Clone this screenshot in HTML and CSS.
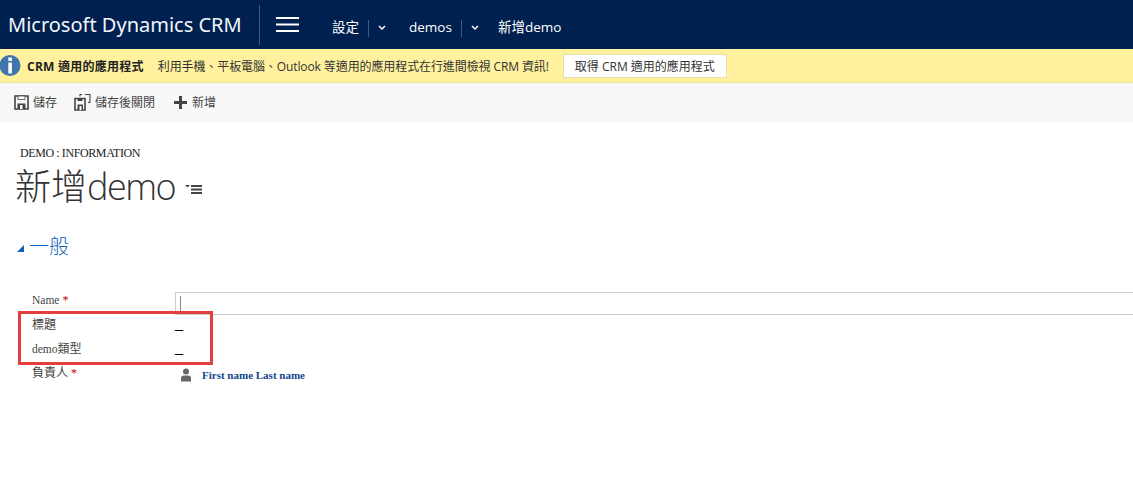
FILE: index.html
```html
<!DOCTYPE html>
<html lang="zh-Hant">
<head>
<meta charset="utf-8">
<title>新增demo</title>
<link rel="stylesheet" href="styles.css">
</head>
<body>
<header class="nav">
  <div class="brand">Microsoft Dynamics CRM</div>
  <div class="burger"><svg width="23" height="15" viewBox="0 0 23 15"><path d="M0 1h23M0 7.500h23M0 14h23" stroke="#fff" stroke-width="2" fill="none"/></svg></div>
  <div class="crumb">設定</div>
  <div class="sep"></div>
  <div class="chev"><svg width="8" height="6" viewBox="0 0 8 6"><path d="M1 1l3 3 3-3" stroke="#fff" stroke-width="1.500" fill="none"/></svg></div>
  <div class="crumb crumb-demos">demos</div>
  <div class="sep"></div>
  <div class="chev"><svg width="8" height="6" viewBox="0 0 8 6"><path d="M1 1l3 3 3-3" stroke="#fff" stroke-width="1.500" fill="none"/></svg></div>
  <div class="crumb">新增demo</div>
</header>
<div class="notice">
  <svg class="info" width="21" height="23" viewBox="0 0 21 23"><circle cx="10" cy="11.500" r="10.500" fill="#3f74ad"/><rect x="8.300" y="3.500" width="3.600" height="3.400" fill="#fff"/><rect x="8.300" y="8.500" width="3.600" height="11" fill="#fff"/></svg>
  <strong class="notice-title">CRM 適用的應用程式</strong>
  <span class="notice-text">利用手機、平板電腦、Outlook 等適用的應用程式在行進間檢視 CRM 資訊!</span>
  <button class="notice-btn">取得 CRM 適用的應用程式</button>
</div>
<div class="commands">
  <div class="cmd cmd-save">
    <svg width="15" height="15" viewBox="0 0 15 15"><path d="M1 1h13v13H1z" fill="none" stroke="#444" stroke-width="1.600"/><path d="M4 1h7v3.500H4z" fill="#fff" stroke="#444" stroke-width=".8"/><path d="M3.500 8.500h8V14h-8z" fill="#444"/><path d="M6 10h2.500v4H6z" fill="#f8f8f8"/></svg>
    <span>儲存</span>
  </div>
  <div class="cmd cmd-close">
    <svg width="17" height="18" viewBox="0 0 17 18"><path d="M1 5.500h10V17H1z" fill="none" stroke="#444" stroke-width="1.600"/><path d="M3.500 11.500h5.500V17H3.500z" fill="#444"/><path d="M5.500 13h2v4h-2z" fill="#f8f8f8"/><path d="M3.500 5.500h5V8h-5z" fill="#444"/><path d="M11 1.500h5v8h-2" fill="none" stroke="#444" stroke-width="1.100"/><path d="M6 3.500v-2h2" fill="none" stroke="#444" stroke-width="1.100"/></svg>
    <span>儲存後關閉</span>
  </div>
  <div class="cmd cmd-new">
    <svg width="13" height="13" viewBox="0 0 13 13"><path d="M5 0h3v5h5v3H8v5H5V8H0V5h5z" fill="#444"/></svg>
    <span>新增</span>
  </div>
</div>
<main class="form">
  <div class="entity">DEMO : INFORMATION</div>
  <div class="title-row">
    <h1 class="title">新增<span class="title-latin">demo</span></h1>
    <svg class="title-icon" width="18" height="11" viewBox="0 0 18 11"><path d="M0 1h5L2.500 3.500z" fill="#444"/><path d="M6 2h11M6 5.500h11M6 9h11" stroke="#444" stroke-width="1.800"/></svg>
  </div>
  <div class="section">
    <svg width="8" height="7" viewBox="0 0 8 7"><path d="M7 0v7H0z" fill="#1160b7"/></svg>
    <span>一般</span>
  </div>
  <div class="fields">
    <div class="label"><span class="latin">Name</span> <em>*</em></div>
    <div class="input"><i class="caret"></i></div>
    <div class="label">標題</div>
    <div class="value">_</div>
    <div class="label"><span class="latin">demo</span>類型</div>
    <div class="value">_</div>
    <div class="label">負責人 <em>*</em></div>
    <div class="owner">
      <svg width="12" height="14" viewBox="0 0 12 14"><circle cx="6" cy="3.500" r="3" fill="#666"/><path d="M1 13.500v-3.500q0-2.500 3-2.500h4q3 0 3 2.500v3.500z" fill="#666"/></svg>
      <a class="owner-link">First name Last name</a>
    </div>
  </div>
  <div class="highlight"></div>
</main>
</body>
</html>
```
FILE: styles.css
```css
* { box-sizing: border-box; }
html, body { margin: 0; padding: 0; height: 100%; overflow: hidden; background: #fff; }
body { font-family: "Open Sans", "Noto Sans CJK TC", sans-serif; color: #333; }

.nav { height: 49px; background: #002050; color: #fff; display: flex; align-items: center; }
.brand { width: 259px; padding-left: 8px; font-size: 20px; line-height: 49px; height: 49px; white-space: nowrap; color: #f2f6fb; font-family: "Noto Sans", "Open Sans", sans-serif; }
.burger { height: 40px; border-left: 1px solid #3f5a85; padding-left: 16px; width: 73px; display: flex; align-items: center; }
.crumb { font-size: 13.500px; line-height: 18px; padding-top: 5px; }
.crumb-demos { margin-left: 4px; }
.sep { width: 1px; height: 17px; background: #3f5a85; margin: 7px 0 0 9px; }
.chev { width: 36px; padding: 6px 0 0 9px; display: flex; }

.notice { height: 34px; background: #fff19e; border-bottom: 1px solid #ece29a; display: flex; align-items: center; white-space: nowrap; }
.info { flex: none; }
.notice-title { font-size: 12px; margin-left: 6px; color: #222; letter-spacing: .25px; }
.notice-text { font-size: 12px; margin-left: 14px; color: #333; letter-spacing: -.1px; }
.notice-btn { margin-left: 14px; width: 164px; height: 24px; background: #fff; border: 1px solid #e6e0a8; font: inherit; font-size: 12px; color: #333; padding: 0; }

.commands { height: 40px; background: #f8f8f8; display: flex; align-items: center; font-size: 12px; color: #444; padding: 0 0 2px 14px; }
.cmd { display: flex; align-items: center; gap: 4px; white-space: nowrap; }
.cmd-close { margin-left: 17px; }
.cmd-new { margin-left: 19px; gap: 5px; }

.form { position: relative; padding-top: 23px; }
.entity { font-family: "Liberation Serif", "Noto Sans CJK TC", serif; font-size: 12px; letter-spacing: -.4px; line-height: 14px; margin-left: 20px; color: #222; }
.title-row { display: flex; align-items: center; margin: 5px 0 0 15px; height: 44px; }
.title { margin: 0; font-weight: 300; font-size: 36px; line-height: 44px; color: #333; }
.title-latin { letter-spacing: -1.500px; }
.title-icon { margin: 4px 0 0 10px; }
.section { display: flex; align-items: center; gap: 4px; margin: 24px 0 0 17px; color: #1160b7; font-size: 20px; line-height: 28px; font-weight: 300; }
.section svg { margin-top: 3px; }

.fields { display: grid; grid-template-columns: 143px 1fr; margin: 27px 0 0 32px; font-family: "Liberation Serif", "Noto Sans CJK TC", serif; font-size: 12px; color: #444; grid-auto-rows: 24px; align-items: center; }
.latin { font-size: 11.500px; }
.label em { color: #c00; font-style: normal; }
.input { height: 23px; margin-top: 4px; border: 1px solid #ccc; border-right: 0; padding: 3px 0 0 4px; align-self: start; }
.caret { display: block; width: 1px; height: 15px; background: #888; }
.value { color: #000; font-size: 16px; line-height: 24px; }
.owner { display: flex; align-items: center; gap: 10px; padding: 5px 0 0 5px; }
.owner-link { color: #10478f; font-size: 11px; font-weight: 700; }
.highlight { position: absolute; left: 18px; top: 188px; width: 195px; height: 54px; border: 3px solid #e2403f; }
```
